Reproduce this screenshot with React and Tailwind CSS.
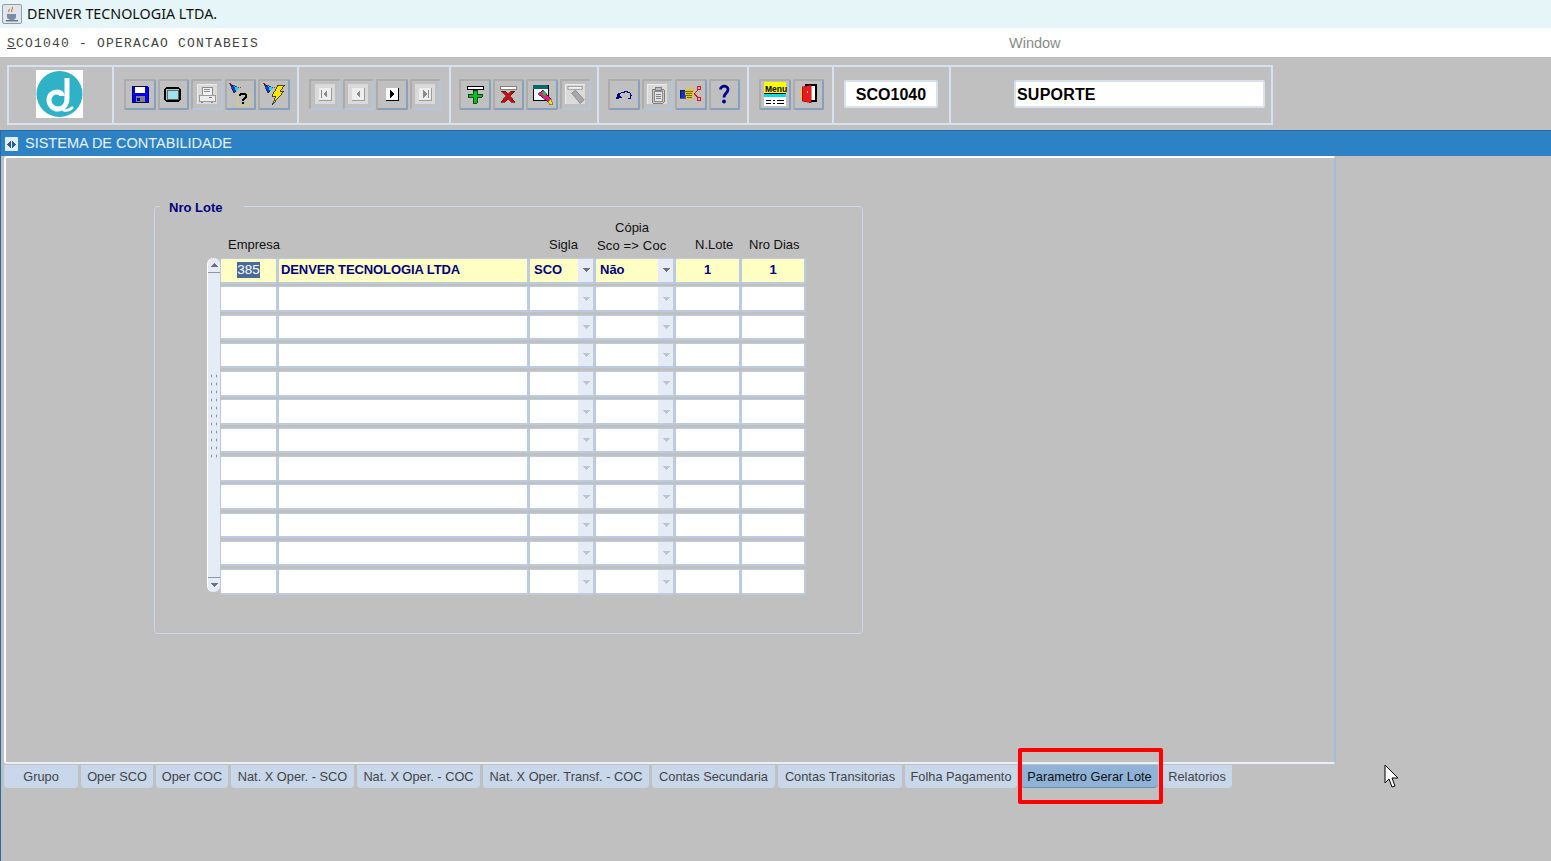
const pixel = { shapeRendering: 'crispEdges' }

const Icon = ({ children, size = 24 }) => (
  <svg width={size} height={size} viewBox="0 0 24 24" {...pixel}>{children}</svg>
)

const Tile = ({ children }) => (
  <div className="flex h-[20px] w-[20px] items-center justify-center bg-[#dadada] border-t border-l border-[#ececec]">{children}</div>
)

// toolbar drawings
const SaveIcon = () => (
  <Icon>
    <path d="M4 4h15l1 1v15H4z" fill="#0000f0" stroke="#000060" strokeWidth="1" />
    <rect x="7" y="5" width="10" height="6" fill="#fff" />
    <rect x="8" y="14" width="9" height="6" fill="#808080" />
    <rect x="9" y="16" width="3" height="3" fill="#0000a0" />
  </Icon>
)
const ScreenIcon = () => (
  <Icon>
    <rect x="4" y="6" width="15" height="13" rx="1" fill="#c0c0c0" stroke="#000" strokeWidth="1.2" />
    <rect x="6" y="8" width="11" height="9" fill="#9fe3ea" stroke="#222" strokeWidth="0.6" />
  </Icon>
)
const PrinterIcon = () => (
  <Tile>
    <svg width="18" height="18" viewBox="0 0 18 18" style={pixel}>
      <rect x="4" y="1" width="10" height="8" fill="#f2f2f2" stroke="#8c8c8c" />
      <path d="M6 3.5h6M6 5.5h6" stroke="#8c8c8c" />
      <rect x="1" y="9" width="16" height="6" fill="#ececec" stroke="#9a9a9a" />
      <rect x="11" y="11" width="3" height="1" fill="#777" />
      <path d="M3 16h2M13 16h2" stroke="#8c8c8c" />
    </svg>
  </Tile>
)
const Flash = () => (
  <>
    <path d="M2 2l9 4-5 5z" fill="#0b3fd8" stroke="#000" strokeWidth="0.6" />
    <path d="M6 4l5 2-3 3z" fill="#25d6e0" />
    <path d="M1 1l2 1M12 5l1 1" stroke="#e01818" strokeWidth="1" />
  </>
)
const QueryIcon = () => (
  <Icon>
    <Flash />
    <rect x="9" y="11" width="12" height="12" fill="none" stroke="#e8e000" strokeWidth="1" strokeDasharray="1 1" />
    <path d="M12 14c0-3 6-3 6 0 0 2-3 2-3 5" fill="none" stroke="#000" strokeWidth="2.2" />
    <rect x="14" y="20" width="2" height="2" fill="#000" />
  </Icon>
)
const BoltIcon = () => (
  <Icon>
    <Flash />
    <path d="M16 3h7l-5 6h4L10 23l4-9h-4z" fill="#ffe600" stroke="#222" strokeWidth="0.8" />
  </Icon>
)
const NavIcon = ({ dir, bar, off }) => {
  const ink = off ? '#8a8a8a' : '#000'
  return (
    <div className={`flex h-[20px] w-[20px] items-center justify-center ${off ? 'bg-[#dadada]' : 'bg-[#c0c0c0]'}`}>
      <svg width="14" height="14" viewBox="0 0 14 14" style={pixel}>
        <rect x="1" y="1" width="12" height="12" fill={off ? '#eeeeee' : '#fff'} />
        {dir === 'left' ? <path d="M9 3v8L5 7z" fill={ink} /> : <path d="M5 3v8l4-4z" fill={ink} />}
        {bar === 'left' && <rect x="3" y="3" width="1" height="8" fill={ink} />}
        {bar === 'right' && <rect x="10" y="3" width="1" height="8" fill={ink} />}
        <path d="M13 1v12H1" fill="none" stroke={off ? '#9c9c9c' : '#000'} />
      </svg>
    </div>
  )
}
const PlusIcon = () => (
  <Icon>
    <rect x="4" y="4" width="16" height="3" fill="#fff" stroke="#000" strokeWidth="1" />
    <path d="M10 8h4v4h5v3h-5v6h-4v-6H5v-3h5z" fill="#00c020" stroke="#002000" strokeWidth="0.8" />
  </Icon>
)
const CrossIcon = () => (
  <Icon>
    <rect x="4" y="4" width="16" height="3" fill="#fff" stroke="#808080" strokeWidth="1" />
    <path d="M5 9h4l3 3 3-3h4l-5 5 5 6h-4l-3-3-3 3H5l5-6z" fill="#c81010" stroke="#400" strokeWidth="0.6" />
  </Icon>
)
const PenIcon = () => (
  <Icon>
    <rect x="3" y="3" width="15" height="15" fill="#fff" stroke="#000" strokeWidth="1" />
    <rect x="3" y="3" width="15" height="4" fill="#006a6a" />
    <path d="M8 12l5-4 8 9-3 3z" fill="#e0208a" stroke="#000" strokeWidth="0.6" />
    <path d="M12 10l3-1 2 3-3 2z" fill="#20c040" />
    <path d="M18 19l3-2 2 5-3 1z" fill="#ffe600" stroke="#333" strokeWidth="0.5" />
  </Icon>
)
const PenOffIcon = () => (
  <Tile>
    <svg width="20" height="20" viewBox="0 0 20 20">
      <rect x="2" y="1" width="15" height="3" fill="#f4f4f4" stroke="#9a9a9a" />
      <path d="M6 8l4-3 9 10-4 4z" fill="#a8a8a8" stroke="#8a8a8a" />
    </svg>
  </Tile>
)
const UndoIcon = () => (
  <Icon>
    <path d="M4 17l2-7 4 6z" fill="#00008b" />
    <path d="M7 12c4-3 12-3 12 1 0 2-1 4-3 4" fill="none" stroke="#00008b" strokeWidth="1.2" />
  </Icon>
)
const ClipIcon = () => (
  <Tile>
    <svg width="18" height="18" viewBox="0 0 18 18" style={pixel}>
      <rect x="3" y="3" width="12" height="14" rx="1" fill="#c6c6c6" stroke="#808080" />
      <rect x="5" y="5" width="8" height="10" fill="#e4e4e4" stroke="#8c8c8c" />
      <rect x="6" y="1" width="6" height="3" fill="#bdbdbd" stroke="#808080" />
      <path d="M6.5 8h5M6.5 10h5M6.5 12h5" stroke="#808080" />
    </svg>
  </Tile>
)
const CutIcon = () => (
  <Icon>
    <rect x="1" y="8" width="5" height="8" fill="#1030d0" stroke="#000" strokeWidth="0.5" />
    <path d="M6 8h9M6 10h8M6 12h8M7 14h7M8 16h5" stroke="#e8c800" strokeWidth="1.2" />
    <path d="M6 9h8M7 11h6M7 13h6M8 15h5" stroke="#222" strokeWidth="0.6" />
    <circle cx="20" cy="6" r="2" fill="none" stroke="#e01010" strokeWidth="1" />
    <circle cx="20" cy="17" r="2" fill="none" stroke="#e01010" strokeWidth="1" />
    <path d="M19 8l-4 4 4 3" fill="none" stroke="#e01010" strokeWidth="1" />
  </Icon>
)
const MenuIcon = () => (
  <Icon>
    <rect x="1" y="0" width="22" height="11" fill="#ffff00" />
    <text x="2" y="9.5" fontFamily="Liberation Sans" fontWeight="700" fontSize="8.5" fill="#000">Menu</text>
    <rect x="1" y="12" width="22" height="3" fill="#10d8e8" />
    <rect x="1" y="15" width="22" height="9" fill="#fff" />
    <path d="M1 11.5h22M3 18h5M10 18h2M14 18h7M3 21h5M10 21h2M14 21h7" stroke="#000" strokeWidth="1" />
  </Icon>
)
const DoorIcon = () => (
  <Icon>
    <rect x="10" y="3" width="10" height="16" fill="#fff" stroke="#000" strokeWidth="1.4" />
    <path d="M6 5l9-2v18l-9-2z" fill="#f01818" stroke="#400" strokeWidth="0.4" />
    <rect x="5" y="7" width="1" height="9" fill="#ffd800" />
    <rect x="11" y="9" width="1" height="2" fill="#fff" />
  </Icon>
)
const HelpIcon = () => (
  <svg width="24" height="24" viewBox="0 0 24 24">
    <path d="M8.5 7.5c0-4.5 7.5-4.5 7.5 0 0 3.5-4 3.5-4 8" fill="none" stroke="#00008b" strokeWidth="2.8" />
    <circle cx="12" cy="19.5" r="1.9" fill="#00008b" />
  </svg>
)

const ToolButton = ({ children, off }) => (
  <div className={`flex h-[31px] w-[31.5px] items-center justify-center rounded-[2px] border-2 border-t-[#acacac] border-l-[#acacac] ${off ? 'border-r-[#b4c6dc] border-b-[#b4c6dc]' : 'border-r-[#86a0bd] border-b-[#86a0bd]'}`}>
    {children}
  </div>
)

const toolSections = [
  { cls: 'w-[185px] pl-[10px]', items: [[<SaveIcon />], [<ScreenIcon />], [<PrinterIcon />, true], [<QueryIcon />], [<BoltIcon />]] },
  { cls: 'w-[152px] pl-[10px]', items: [[<NavIcon dir="left" bar="left" off />, true], [<NavIcon dir="left" off />, true], [<NavIcon dir="right" />], [<NavIcon dir="right" bar="right" off />, true]] },
  { cls: 'w-[148px] pl-[8px]', items: [[<PlusIcon />], [<CrossIcon />], [<PenIcon />], [<PenOffIcon />, true]] },
  { cls: 'w-[150px] pl-[9px]', items: [[<UndoIcon />], [<ClipIcon />, true], [<CutIcon />], [<HelpIcon />]] },
  { cls: 'w-[85px] pl-[10px]', items: [[<MenuIcon />], [<DoorIcon />]] },
]

const Logo = () => (
  <svg width="47" height="48" viewBox="0 0 47 48">
    <rect width="47" height="48" fill="#fff" />
    <circle cx="23.5" cy="24" r="23" fill="#2fb1c6" />
    <path d="M31 8v20c0 7-4 11-9 11s-9-4-9-9 4-8 8-8 5 2 5 4" fill="none" stroke="#fff" strokeWidth="5" />
    <path d="M27 40c3 1 7 0 10-3" fill="none" stroke="#fff" strokeWidth="2.5" />
  </svg>
)

const Toolbar = () => (
  <div className="h-[73px] pl-[7px] pt-[8px]">
    <div className="flex h-[60px] w-[1266px] border-2 border-[#d6e2f0]">
      <div className="flex w-[105px] items-center pb-[2px] pl-[27px] border-r-2 border-[#d6e2f0]">
        <Logo />
      </div>
      {toolSections.map((s, i) => (
        <div key={i} className={`flex items-center gap-[2px] pb-[2px] border-r-2 border-[#d6e2f0] ${s.cls}`}>
          {s.items.map(([icon, off], j) => <ToolButton key={j} off={off}>{icon}</ToolButton>)}
        </div>
      ))}
      <div className="flex w-[117px] items-center pb-[2px] pl-[10px] border-r-2 border-[#d6e2f0]">
        <div className="flex h-[28px] w-[94px] items-center justify-center rounded-[2px] border-2 border-[#d6e2f0] bg-white pt-[1px] text-[16px] font-bold text-black">SCO1040</div>
      </div>
      <div className="flex items-center pb-[2px] pl-[63px]">
        <div className="flex h-[28px] w-[251px] items-center rounded-[2px] border-2 border-[#d6e2f0] bg-white pl-[1px] pt-[1px] text-[16px] font-bold tracking-[0.2px] text-black">SUPORTE</div>
      </div>
    </div>
  </div>
)

const Arrow = ({ up, light }) => (
  <svg width="8" height="4" viewBox="0 0 8 4" style={pixel}>
    <path d={up ? 'M4 0l4 4H0z' : 'M0 0h8L4 4z'} fill={light ? '#c0c4cc' : '#70707c'} />
  </svg>
)

const cellBase = 'h-[25.5px] rounded-[2px] border border-r-2 border-b-2 border-[#bccbe0]'

const Cell = ({ w, active, children, cls = '' }) => (
  <div className={`${cellBase} ${w} ${active ? 'bg-[#ffffc4]' : 'bg-white'} ${cls}`}>{children}</div>
)

const Combo = ({ w, active, text }) => (
  <div className={`${cellBase} ${w} flex ${active ? 'bg-[#ffffc4]' : 'bg-white'}`}>
    <div className="flex-1 pl-[4px] text-[13px] font-bold leading-[22px] text-[#00007f]">{text}</div>
    <div className="flex w-[15px] items-center justify-center bg-[#e6ecf5]"><Arrow light={!active} /></div>
  </div>
)

const Row = ({ active }) => (
  <div className="flex h-[28.3px]">
    <Cell w="w-[58px]" active={active} cls="flex items-center justify-center">
      {active && <span className="bg-[#4a6a9c] text-[13.5px] leading-[16px] text-white">385</span>}
    </Cell>
    <Cell w="w-[251px]" active={active} cls="pl-[2px] text-[13px] font-bold leading-[22px] tracking-[-0.1px] text-[#00007f]">
      {active && 'DENVER TECNOLOGIA LTDA'}
    </Cell>
    <Combo w="w-[66px]" active={active} text={active && 'SCO'} />
    <Combo w="w-[80px]" active={active} text={active && 'Não'} />
    <Cell w="w-[66px]" active={active} cls="text-center text-[13px] font-bold leading-[22px] text-[#00007f]">{active && '1'}</Cell>
    <Cell w="w-[65px]" active={active} cls="text-center text-[13px] font-bold leading-[22px] text-[#00007f]">{active && '1'}</Cell>
  </div>
)

const Scrollbar = () => (
  <div className="flex h-[334px] w-[13px] flex-col rounded-[6px] border-l border-white bg-[#e6ecf5]">
    <div className="flex h-[15px] items-center justify-center border-b border-[#8c94a8]"><Arrow up /></div>
    <div className="flex flex-1 items-center justify-center">
      <div className="mb-[20px] h-[86px] w-[10px] bg-[radial-gradient(#8492a8_0.8px,transparent_1px)] bg-[length:5px_8px]" />
    </div>
    <div className="flex h-[15px] items-center justify-center border-t border-[#8c94a8]"><Arrow /></div>
  </div>
)

const GroupBox = () => (
  <div className="relative ml-[148px] mt-[48px] h-[428px] w-[709px] rounded-[4px] border border-[#cbd9ea] pl-[52px] pt-[12px]">
    <div className="absolute -top-[8px] left-[5px] bg-[#c0c0c0] pl-[9px] pr-[22px] text-[13px] font-bold leading-[18px] text-[#00007f]">Nro Lote</div>
    <div className="flex h-[39px] pb-[4px] text-[13px] leading-[18px] text-[#111]">
      <div className="flex w-[342px] items-end pl-[21px]">Empresa</div>
      <div className="flex w-[48px] items-end">Sigla</div>
      <div className="flex w-[98px] flex-col items-start">
        <span className="w-[70px] text-center">Cópia</span>
        <span className="tracking-[0.15px]">Sco =&gt; Coc</span>
      </div>
      <div className="flex w-[54px] items-end">N.Lote</div>
      <div className="flex items-end">Nro Dias</div>
    </div>
    <div className="flex">
      <Scrollbar />
      <div>
        {Array.from({ length: 12 }).map((_, i) => <Row key={i} active={i === 0} />)}
      </div>
    </div>
  </div>
)

const tabs = [
  { label: 'Grupo', w: 'w-[74px]' },
  { label: 'Oper SCO', w: 'w-[72px]' },
  { label: 'Oper COC', w: 'w-[72px]' },
  { label: 'Nat. X Oper. - SCO', w: 'w-[123px]' },
  { label: 'Nat. X Oper. - COC', w: 'w-[123px]' },
  { label: 'Nat. X Oper. Transf. - COC', w: 'w-[166px]' },
  { label: 'Contas Secundaria', w: 'w-[123px]' },
  { label: 'Contas Transitorias', w: 'w-[124px]' },
  { label: 'Folha Pagamento', w: 'w-[112px]' },
  { label: 'Parametro Gerar Lote', w: 'w-[137px]', active: true },
  { label: 'Relatorios', w: 'w-[70px]' },
]

export default function App() {
  return (
    <div className="relative h-screen overflow-hidden bg-[#c0c0c0] font-['Liberation_Sans',sans-serif]">
      {/* Title bar */}
      <div className="flex h-[28px] items-center gap-[5px] bg-[#e6f5f7] pb-[1px] pl-[2px]">
        <div className="flex h-[20px] w-[20px] items-center justify-center rounded-[2px] border border-[#9a9a9a] bg-[#dfe6ee]">
          <svg width="14" height="16" viewBox="0 0 14 16">
            <path d="M7 1c2 2-2 3 0 5M4 3c1 1-1 2 0 3" fill="none" stroke="#d9772b" strokeWidth="1.2" />
            <path d="M2 8h9v3c0 2-2 3-4 3s-5-1-5-3z" fill="#7a8ca6" />
            <rect x="1" y="14" width="12" height="1.4" fill="#5d7390" />
          </svg>
        </div>
        <span className="font-['Noto_Sans',sans-serif] text-[14.3px] text-[#111]">DENVER TECNOLOGIA LTDA.</span>
      </div>

      {/* Form title */}
      <div className="flex h-[29px] items-center bg-white pl-[7px] pt-[3px]">
        <span className="w-[1002px] font-['Liberation_Mono',monospace] text-[13px] tracking-[1.2px] text-[#444]"><span className="underline">S</span>CO1040 - OPERACAO CONTABEIS</span>
        <span className="text-[14.5px] text-[#8a8a8a]">Window</span>
      </div>

      <Toolbar />

      {/* MDI window */}
      <div className="h-[731px] border-l border-[#2a6aa0]">
        <div className="flex h-[26px] items-center border-t border-[#2a6aa0] bg-[#2c82c4] pl-[4px] pt-[1px]">
          <div className="flex h-[14px] w-[13px] items-center justify-center rounded-[1px] bg-[#e4edf6]">
            <svg width="9" height="7" viewBox="0 0 9 7" style={pixel}>
              <path d="M4 0v7L0 3.5zM5 0v7l4-3.5z" fill="#1f5f9a" />
            </svg>
          </div>
          <span className="ml-[7px] text-[14.5px] text-[#eaf2fa]">SISTEMA DE CONTABILIDADE</span>
        </div>
        <div className="ml-[3px] h-[608px] w-[1332px] rounded-[3px] border-2 border-white border-r-[#a3bcd8] border-b-[#e8eff7]">
          <GroupBox />
        </div>
        <div className="ml-[3px] mt-[1px] flex gap-[3px]">
          {tabs.map((t) => (
            <div
              key={t.label}
              className={`flex h-[23px] items-center justify-center whitespace-nowrap rounded-b-[4px] text-[12.8px] ${t.w} ${t.active ? 'mx-[1px] border-b border-[#6f8fb0] bg-[#8fb3d6] pt-[1px] text-[#111]' : 'bg-[#c8d7ea] text-[#444]'}`}
            >
              {t.label}
            </div>
          ))}
        </div>
      </div>

      {/* Annotation over the active tab */}
      <div className="absolute left-[1018px] top-[748px] h-[56px] w-[145px] rounded-[2px] border-4 border-[#ff0000]" />

      {/* Mouse pointer */}
      <svg className="absolute left-[1384px] top-[764px]" width="16" height="25" viewBox="0 0 16 25">
        <path d="M1 1v18l4-4 3 8 3-1-3-8h6z" fill="#fff" stroke="#000" strokeWidth="1" />
      </svg>
    </div>
  )
}
